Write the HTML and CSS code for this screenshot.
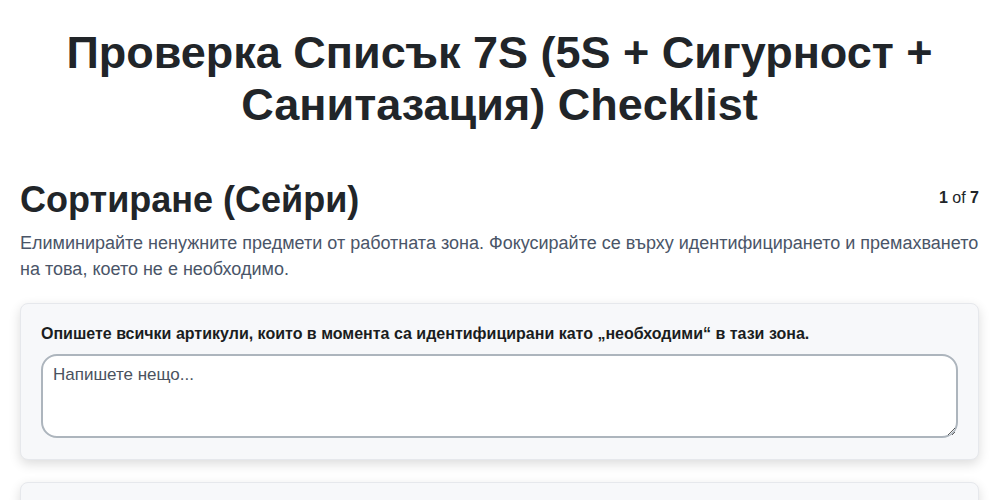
FILE: index.html
```html
<!DOCTYPE html>
<html lang="bg">
<head>
<meta charset="utf-8">
<title>7S Checklist</title>
<link rel="stylesheet" href="styles.css">
</head>
<body>
<main class="page">
  <h1 class="title">Проверка Списък 7S (5S + Сигурност + Санитазация) Checklist</h1>
  <section class="step">
    <div class="step-head">
      <h2 class="step-title">Сортиране (Сейри)</h2>
      <div class="step-count"><b>1</b> of <b>7</b></div>
    </div>
    <p class="step-desc">Елиминирайте ненужните предмети от работната зона. Фокусирайте се върху идентифицирането и премахването на това, което не е необходимо.</p>
    <div class="card">
      <label class="q-label" for="q1">Опишете всички артикули, които в момента са идентифицирани като „необходими“ в тази зона.</label>
      <textarea id="q1" class="q-input" placeholder="Напишете нещо..."></textarea>
    </div>
    <div class="card">
      <label class="q-label" for="q2">Опишете всички артикули, които не са необходими в тази зона.</label>
      <textarea id="q2" class="q-input" placeholder="Напишете нещо..."></textarea>
    </div>
  </section>
</main>
</body>
</html>
```
FILE: styles.css
```css
html, body {
  margin: 0;
  padding: 0;
  background: #ffffff;
}
body {
  font-family: "Liberation Sans", Arial, sans-serif;
  color: #212529;
}
.page {
  padding: 27px 21px 0 20px;
}
.title {
  margin: 0 0 47px;
  font-size: 45px;
  line-height: 52px;
  font-weight: 700;
  text-align: center;
  color: #212529;
}
.step-head {
  display: flex;
  justify-content: space-between;
  align-items: flex-start;
}
.step-title {
  margin: 0;
  font-size: 36px;
  line-height: 44px;
  font-weight: 700;
  color: #212529;
}
.step-count {
  font-size: 16px;
  line-height: 20px;
  margin-top: 10px;
  color: #212529;
}
.step-desc {
  margin: 8px 0 21px;
  font-size: 18px;
  line-height: 26px;
  color: #4a5568;
}
.card {
  background: #f7f8fa;
  border: 1px solid #e6e8ec;
  border-radius: 8px;
  box-shadow: 0 4px 12px rgba(0, 0, 0, 0.14);
  padding: 19px 20px 21px;
  margin: 0 0 22px;
}
.q-label {
  display: block;
  font-size: 16px;
  line-height: 22px;
  font-weight: 700;
  color: #1a1d21;
  margin-bottom: 9px;
}
.q-input {
  display: block;
  box-sizing: border-box;
  width: 100%;
  height: 84px;
  padding: 8px 10px 10px;
  border: 2px solid #adb5bd;
  border-radius: 16px;
  background: #ffffff;
  font-family: "Liberation Sans", Arial, sans-serif;
  font-size: 17px;
  line-height: 22px;
  color: #212529;
  resize: vertical;
}
.q-input::placeholder {
  color: #4a5260;
  opacity: 1;
}
```
